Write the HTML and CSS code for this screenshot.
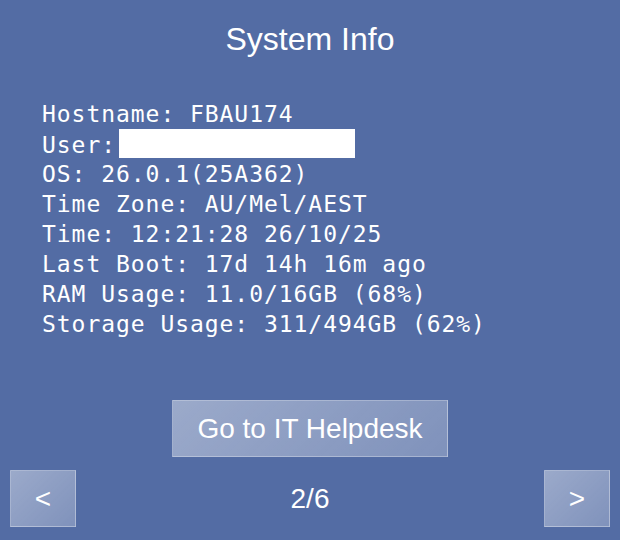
FILE: index.html
```html
<!DOCTYPE html>
<html>
<head>
<meta charset="utf-8">
<link rel="stylesheet" href="styles.css">
</head>
<body>
<div class="screen">
  <h1 class="title">System Info</h1>
  <div class="info">
    <div class="line">Hostname: FBAU174</div>
    <div class="line">User:<span class="redact"></span></div>
    <div class="line">OS: 26.0.1(25A362)</div>
    <div class="line">Time Zone: AU/Mel/AEST</div>
    <div class="line">Time: 12:21:28 26/10/25</div>
    <div class="line">Last Boot: 17d 14h 16m ago</div>
    <div class="line">RAM Usage: 11.0/16GB (68%)</div>
    <div class="line">Storage Usage: 311/494GB (62%)</div>
  </div>
  <div class="action">
    <button class="btn helpdesk">Go to IT Helpdesk</button>
  </div>
  <div class="nav">
    <button class="btn navbtn">&lt;</button>
    <div class="page">2/6</div>
    <button class="btn navbtn">&gt;</button>
  </div>
</div>
</body>
</html>
```
FILE: styles.css
```css
html, body {
  margin: 0;
  padding: 0;
  background: #536ca4;
}
.screen {
  width: 620px;
  height: 540px;
  color: #fff;
  font-family: "Liberation Sans", Arial, sans-serif;
  overflow: hidden;
}
.title {
  margin: 19px 0 0 0;
  font-size: 32px;
  font-weight: normal;
  line-height: 40px;
  text-align: center;
}
.info {
  margin-top: 40px;
  padding-left: 42px;
  font-family: "DejaVu Sans Mono", "Liberation Mono", monospace;
  font-size: 23px;
  letter-spacing: 0.95px;
}
.line {
  height: 30px;
  line-height: 30px;
  white-space: pre;
}
.redact {
  display: inline-block;
  width: 236px;
  height: 29px;
  margin-left: 3px;
  background: #fff;
  vertical-align: -5px;
}
.action {
  margin-top: 61px;
  display: flex;
  justify-content: center;
}
.btn {
  box-sizing: border-box;
  margin: 0;
  padding: 0;
  border: 1px solid rgba(255, 255, 255, 0.28);
  background: linear-gradient(135deg, rgba(255, 255, 255, 0.42), rgba(255, 255, 255, 0.26));
  color: #fff;
  font-family: "Liberation Sans", Arial, sans-serif;
  font-size: 28px;
  border-radius: 0;
}
.helpdesk {
  width: 276px;
  height: 57px;
}
.nav {
  margin-top: 13px;
  padding: 0 10px;
  display: flex;
  align-items: center;
  justify-content: space-between;
}
.navbtn {
  width: 66px;
  height: 57px;
}
.page {
  font-size: 28px;
}
```
